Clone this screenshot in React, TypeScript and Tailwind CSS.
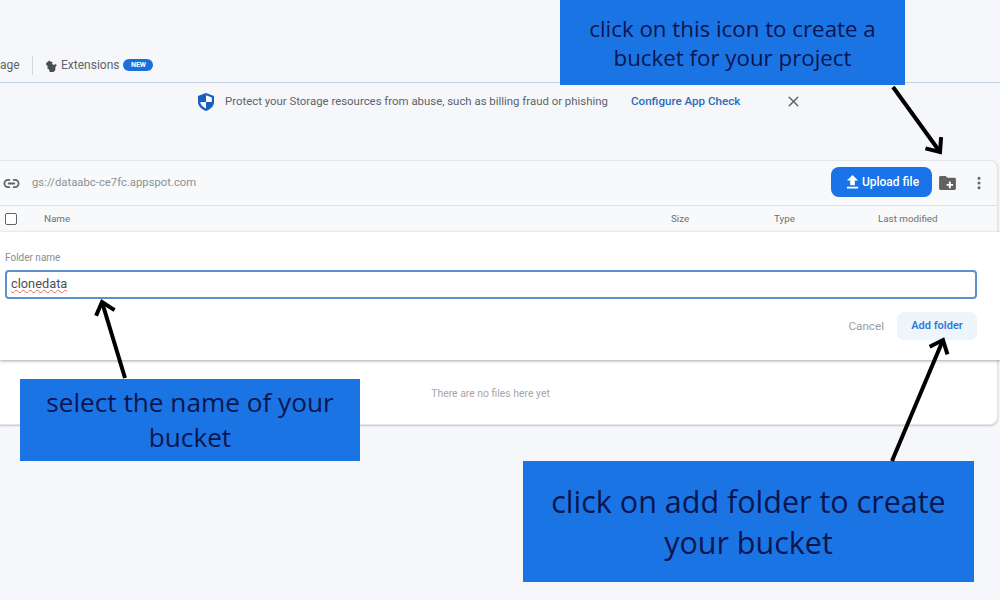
import React from 'react';
import { Link2, MoreVertical, X } from 'lucide-react';

const Arrow: React.FC<{ x1: number; y1: number; x2: number; y2: number }> = ({ x1, y1, x2, y2 }) => {
  // arrow head is worked out from the shaft direction
  const a = Math.atan2(y2 - y1, x2 - x1);
  const len = 15;
  const p = (d: number) => `${x2 - len * Math.cos(a + d)},${y2 - len * Math.sin(a + d)}`;
  return (
    <g stroke="#000" strokeWidth="4" fill="none" strokeLinejoin="miter">
      <line x1={x1} y1={y1} x2={x2} y2={y2} />
      <polyline points={`${p(0.7)} ${x2},${y2} ${p(-0.7)}`} />
    </g>
  );
};

const Note: React.FC<{ className: string; lines: string[] }> = ({ className, lines }) => (
  <div className={`absolute bg-[#1b74e4] text-[#0a1650] text-center flex flex-col justify-center font-['Open_Sans',sans-serif] ${className}`}>
    {lines.map((l, i) => (
      <div key={i}>{l}</div>
    ))}
  </div>
);

export default function App() {
  return (
    <div className="relative w-[1000px] h-[600px] overflow-hidden bg-[#f5f7fa] font-['Roboto',sans-serif]">
      {/* top nav */}
      <div className="h-[83px] border-b border-[#c9d5e3] flex items-center pt-[55px] pb-[7px] text-[12px] text-[#5f6368]">
        <span className="w-[32px] text-[12px]">age</span>
        <div className="w-px h-[19px] bg-[#d5d8dc]" />
        <svg viewBox="0 0 24 24" className="w-[15px] h-[15px] ml-[12px] fill-[#4a4f57]">
          <path d="M2 8l5-4 2.500 2.500c1-1 3-.5 2.500 1.500l-1 1 3 2 2-1c2.500-.5 3.500 2 1.500 3.500l-1 1v5l-3 3h-6l-1-4-3-2 1-3-3-3.500z" />
        </svg>
        <span className="ml-[1px]">Extensions</span>
        <span className="ml-[4px] w-[30px] h-[12px] rounded-full bg-[#1a6fdc] text-white text-[7px] font-bold flex items-center justify-center">NEW</span>
      </div>

      {/* app check banner */}
      <div className="h-[37px] flex items-center pl-[198px] text-[11.400px] text-[#5f6368]">
        <svg viewBox="0 0 16 18" className="w-[16px] h-[18px]">
          <path d="M8 0l8 3v6c0 4-3 7-8 9-5-2-8-5-8-9V3z" fill="#1a5fc0" />
          <path d="M8 2.200l5.800 2.200V9H8zM8 9H2.200c.3 3 2.600 5 5.800 6.600z" fill="#fff" />
        </svg>
        <span className="ml-[11px] w-[406px] whitespace-nowrap">Protect your Storage resources from abuse, such as billing fraud or phishing</span>
        <span className="text-[11.600px] text-[#2b6cb8] font-medium whitespace-nowrap w-[156px]">Configure App Check</span>
        <X className="w-[17px] h-[17px] -ml-[2px] text-[#5f6368]" />
      </div>

      {/* storage card */}
      <div className="mt-[40px] mr-[2px] rounded-tr-[8px] rounded-br-[8px] bg-[#f8f9fa] border-y border-r border-[#e3e5e8] shadow-[0_1px_2px_rgba(0,0,0,0.2)]">
        <div className="h-[45px] flex items-center border-b border-[#dfe1e4] pl-[3px]">
          <Link2 className="w-[17px] h-[17px] text-[#5f6368]" strokeWidth={2.5} />
          <span className="ml-[12px] text-[11.300px] text-[#8d9094]">gs://dataabc-ce7fc.appspot.com</span>
          <button className="ml-auto w-[101px] h-[30px] -mt-[2px] pl-[2px] rounded-[8px] bg-[#1a73e8] text-white text-[12px] font-medium flex items-center justify-center">
            <svg viewBox="0 0 14 15" className="w-[13px] h-[14px] fill-white mr-[3px]">
              <path d="M7 0l6 6H9.500v5h-5V6H1zM1 12.500h12V14.500H1z" />
            </svg>
            Upload file
          </button>
          <svg viewBox="0 0 18 15" className="w-[17px] h-[14px] ml-[7px]">
            <path d="M0 1.500C0 .7.700 0 1.500 0H7l2 2h7.500c.8 0 1.500.7 1.500 1.500v10c0 .8-.7 1.500-1.500 1.500h-15C.7 15 0 14.300 0 13.500z" fill="#616161" />
            <path d="M10.500 6h2v2.500H15v2h-2.500V13h-2v-2.500H8v-2h2.500z" fill="#fff" />
          </svg>
          <MoreVertical className="w-[16px] h-[16px] ml-[15px] mr-[10px] text-[#5f6368]" strokeWidth={2.5} />
        </div>
        <div className="h-[26px] flex items-center text-[9.800px] text-[#6d7175]">
          <div className="w-[12px] h-[12px] ml-[5px] rounded-[2px] border border-[#5f6368] bg-white" />
          <span className="ml-[27px] w-[627px]">Name</span>
          <span className="w-[103px]">Size</span>
          <span className="w-[104px]">Type</span>
          <span>Last modified</span>
        </div>

        {/* new folder form */}
        <div className="relative -mr-[3px] h-[128px] bg-white shadow-[0_1px_3px_rgba(0,0,0,0.35)] px-[5px] pt-[20px]">
          <div className="text-[10px] leading-[12px] text-[#8a8d91]">Folder name</div>
          <div className="mt-[6px] mr-[18px] h-[29px] rounded-[4px] border-2 border-[#5d90cf] flex items-center pl-[4px] text-[12.800px] text-[#4c4f53]">
            <span className="-mt-[2px] underline decoration-wavy decoration-[#e06a6a] decoration-1">clonedata</span>
          </div>
          <div className="mt-[13px] mr-[18px] flex items-center justify-end">
            <span className="mt-[1px] text-[11.700px] text-[#9a9da1]">Cancel</span>
            <button className="ml-[13px] w-[80px] h-[28px] rounded-[7px] bg-[#eff5fc] text-[11px] font-semibold text-[#2f7bd6]">Add folder</button>
          </div>
        </div>

        <div className="h-[64px] bg-white rounded-br-[8px] flex items-center justify-center pt-[3px] text-[10.400px] text-[#a9a4a8]">
          <span className="ml-[-16px]">There are no files here yet</span>
        </div>
      </div>

      {/* tutorial annotations, drawn on top of the screenshot */}
      <Note className="left-[560px] top-0 w-[345px] h-[85px] text-[22.300px] leading-[29px] pt-[1px]" lines={['click on this icon to create a', 'bucket for your project']} />
      <Note className="left-[20px] top-[379px] w-[340px] h-[82px] text-[26.200px] leading-[35px]" lines={['select the name of your', 'bucket']} />
      <Note className="left-[523px] top-[461px] w-[451px] h-[121px] text-[30.500px] leading-[41px]" lines={['click on add folder to create', 'your bucket']} />
      <svg className="absolute inset-0 pointer-events-none" width="1000" height="600">
        <Arrow x1={893} y1={87} x2={940} y2={152} />
        <Arrow x1={125} y1={378} x2={102} y2={302} />
        <Arrow x1={892} y1={461} x2={943} y2={340} />
      </svg>
    </div>
  );
}
